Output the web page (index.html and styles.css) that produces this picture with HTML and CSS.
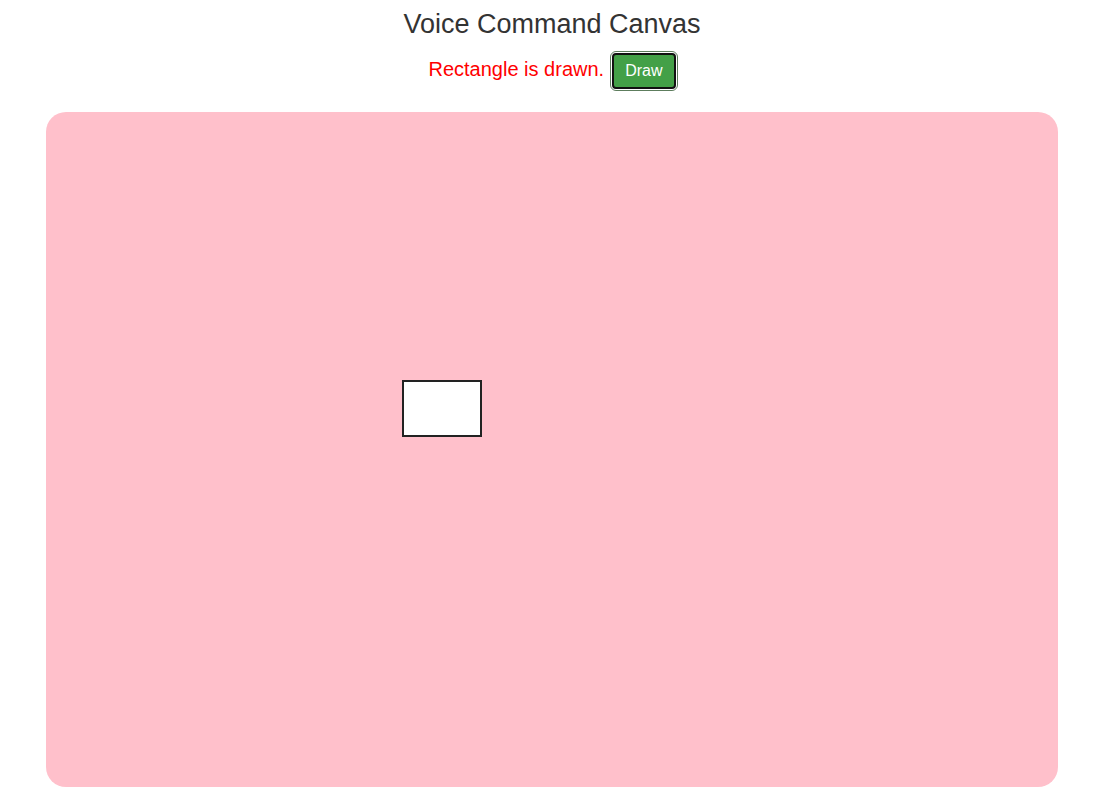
FILE: index.html
```html
<!DOCTYPE html>
<html lang="en">
<head>
<meta charset="utf-8">
<title>Voice Command Canvas</title>
<link rel="stylesheet" href="styles.css">
</head>
<body>
  <header class="header">
    <h1 class="title">Voice Command Canvas</h1>
    <div class="controls">
      <span class="status">Rectangle is drawn.</span>
      <button class="draw-btn" type="button">Draw</button>
    </div>
  </header>
  <main class="canvas">
    <div class="shape-rect"></div>
  </main>
</body>
</html>
```
FILE: styles.css
```css
html, body {
  margin: 0;
  background: #ffffff;
}
body {
  padding: 8px 0 0 3px;
  font-family: "Liberation Sans", Arial, sans-serif;
}
.header {
  display: flex;
  flex-direction: column;
  align-items: center;
}
.title {
  margin: 0;
  font-size: 27px;
  line-height: 32px;
  font-weight: normal;
  color: #333333;
}
.controls {
  margin-top: 13px;
  display: flex;
  align-items: center;
  gap: 8px;
}
.status {
  font-size: 20px;
  color: #ff0000;
  padding-bottom: 4px;
}
.draw-btn {
  height: 36px;
  padding: 0 11px;
  background: #43a047;
  color: #ffffff;
  font-family: "Liberation Sans", Arial, sans-serif;
  font-size: 16px;
  border: 2px solid #111111;
  border-radius: 4px;
  outline: 1px solid #5d7d5d;
  outline-offset: 1px;
}
.canvas {
  position: relative;
  width: 1012px;
  height: 675px;
  margin: 23px auto 0;
  background: #ffc0cb;
  border-radius: 20px;
}
.shape-rect {
  position: absolute;
  left: 356px;
  top: 268px;
  width: 76px;
  height: 53px;
  background: #ffffff;
  border: 2px solid #222222;
}
```
